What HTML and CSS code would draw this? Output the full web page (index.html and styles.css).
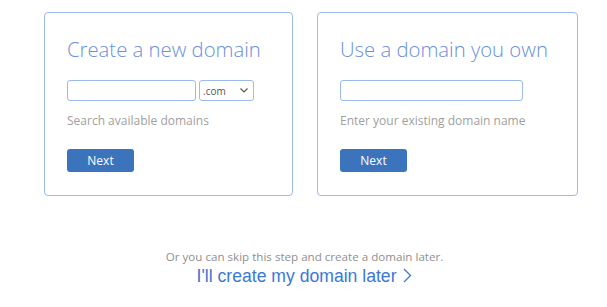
FILE: index.html
```html
<!DOCTYPE html>
<html lang="en">
<head>
    <meta charset="UTF-8">
    <meta name="viewport" content="width=device-width, initial-scale=1.0">
    <title>Choose a domain</title>
    <link rel="stylesheet" href="styles.css">
</head>
<body>
    <div class="options">
        <form class="card card-new">
            <h2>Create a new domain</h2>
            <div class="row">
                <input type="text" class="box box-name">
                <div class="select-wrap">
                    <select class="box box-tld">
                        <option>.com</option>
                        <option>.net</option>
                        <option>.org</option>
                    </select>
                    <svg class="chevron" width="8" height="5" viewBox="0 0 8 5"><path d="M0.5 0.5 L4 4 L7.5 0.5" fill="none" stroke="#555" stroke-width="1.1"/></svg>
                </div>
            </div>
            <p class="hint">Search available domains</p>
            <input type="submit" value="Next" class="btn">
        </form>

        <form class="card card-own">
            <h2>Use a domain you own</h2>
            <div class="row">
                <input type="text" class="box box-own">
            </div>
            <p class="hint">Enter your existing domain name</p>
            <input type="submit" value="Next" class="btn">
        </form>
    </div>

    <div class="later">
        <p>Or you can skip this step and create a domain later.</p>
        <a href="#">I'll create my domain later <svg class="arrow" width="9" height="15" viewBox="0 0 9 15"><path d="M1 1 L7.5 7.5 L1 14" fill="none" stroke="#3b78d6" stroke-width="1.3"/></svg></a>
    </div>
</body>
</html>
```

FILE: styles.css
```css
body {
    margin: 0;
    background: #fff;
    font-family: "Open Sans", sans-serif;
}
.options {
    display: flex;
    gap: 24px;
    padding: 12px 0 0 44px;
}
.card {
    box-sizing: border-box;
    height: 184px;
    padding: 22px 22px 0 22px;
    border: 1px solid #9cbbea;
    border-radius: 4px;
    display: flex;
    flex-direction: column;
    align-items: flex-start;
}
.card-new {
    width: 249px;
}
.card-own {
    width: 261px;
}
.card h2 {
    margin: 0;
    font-size: 20.3px;
    font-weight: 300;
    line-height: 28px;
    color: #6a90dc;
}
.row {
    display: flex;
    gap: 3px;
    margin-top: 17px;
}
.box {
    box-sizing: border-box;
    display: block;
    height: 21px;
    margin: 0;
    border: 1px solid #9cbbea;
    border-radius: 3px;
    background: #fff;
    font-family: "Open Sans", sans-serif;
    outline: none;
}
.box-name {
    width: 129px;
}
.box-own {
    width: 183px;
}
.select-wrap {
    position: relative;
    height: 21px;
}
.box-tld {
    width: 55px;
    padding: 0 0 0 3px;
    font-size: 10px;
    color: #555;
    appearance: none;
    -webkit-appearance: none;
}
.chevron {
    position: absolute;
    right: 6px;
    top: 8px;
    pointer-events: none;
}
.hint {
    margin: 12px 0 0 0;
    font-size: 12px;
    line-height: 16px;
    color: #a0a0a0;
}
.btn {
    margin-top: 20px;
    width: 67px;
    height: 23px;
    border: none;
    border-radius: 3px;
    background: #3b74bd;
    color: #fff;
    font-family: "Open Sans", sans-serif;
    font-size: 12px;
    cursor: pointer;
}
.later {
    margin-top: 53px;
    text-align: center;
    padding-left: 2px;
}
.later p {
    margin: 0;
    font-size: 11.6px;
    line-height: 16px;
    color: #8f8f8f;
}
.later a {
    display: inline-block;
    margin-top: 1px;
    font-family: "Liberation Sans", Arial, sans-serif;
    font-size: 17.6px;
    line-height: 20px;
    color: #3b78d6;
    text-decoration: none;
}
.arrow {
    vertical-align: -1px;
    margin-left: 2px;
}
```
